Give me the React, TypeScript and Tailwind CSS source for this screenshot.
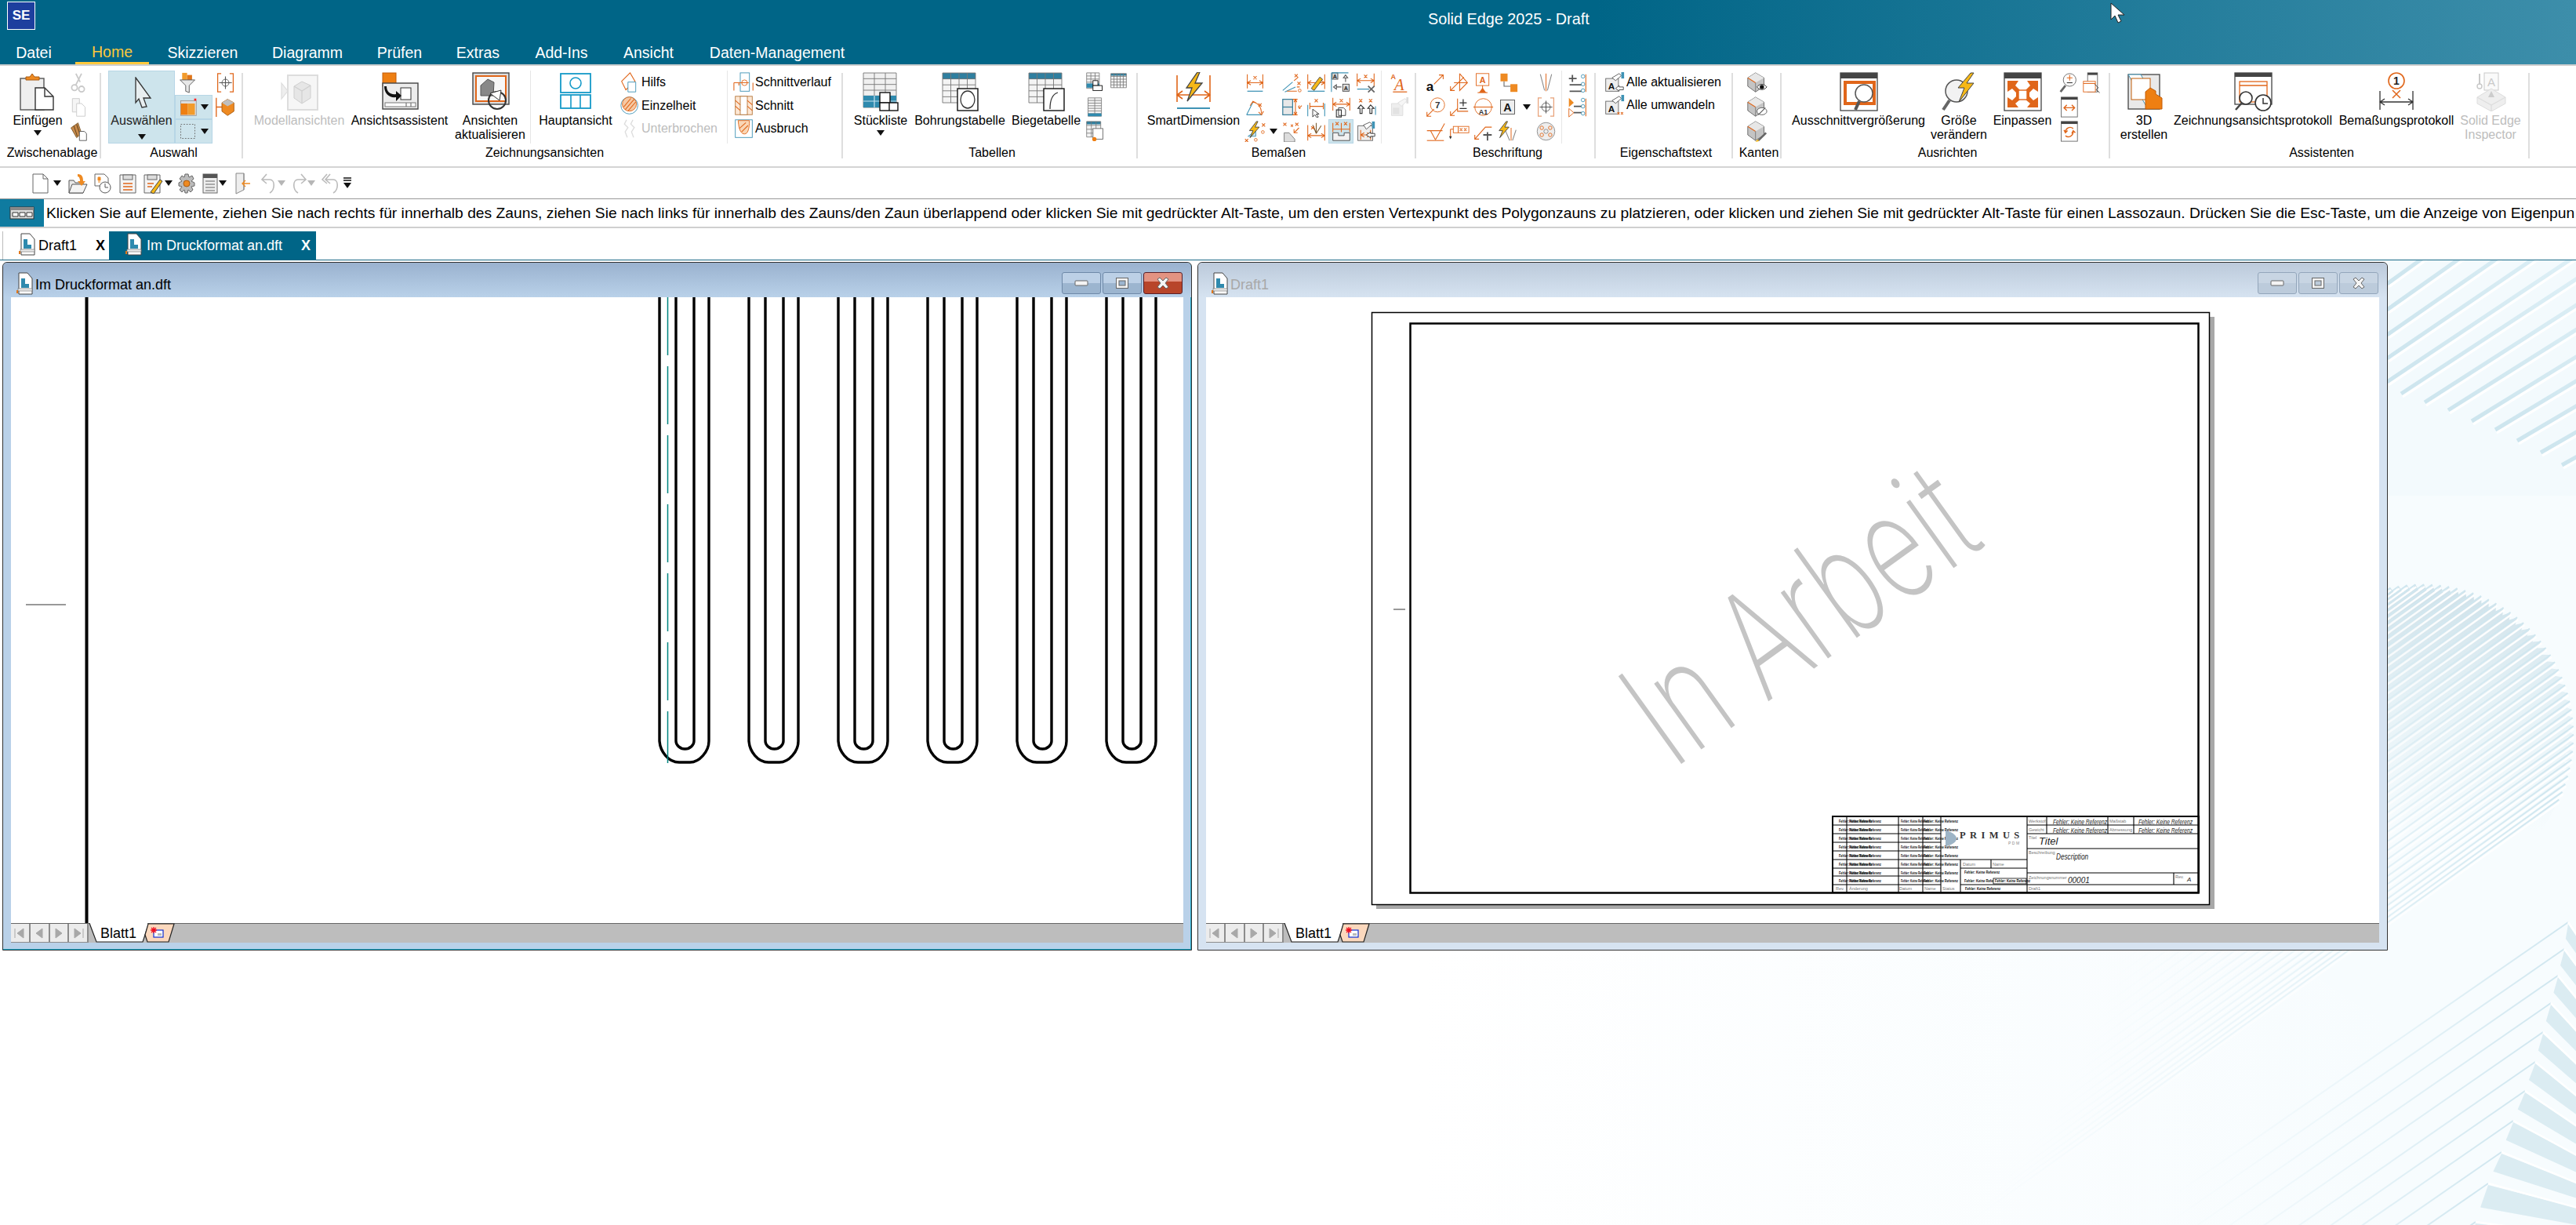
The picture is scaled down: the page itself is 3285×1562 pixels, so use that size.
import type { ReactNode } from 'react';

const O = '#e0661a';
const T = '#3f93b5';
const L = '#c9c9c9';

const x = (cx: number, cy: number, r = 2.2) => `M${cx - r} ${cy - r}L${cx + r} ${cy + r}M${cx + r} ${cy - r}L${cx - r} ${cy + r}`;
const dim = (l: number, r: number, y: number, t = 3, b = 25) =>
  `M${l} ${t}V${b}M${r} ${t}V${b}M${l} ${y}H${r}M${l + 5} ${y - 3}L${l} ${y}L${l + 5} ${y + 3}M${r - 5} ${y - 3}L${r} ${y}L${r - 5} ${y + 3}`;

const Ic = ({ s = 27, children }: { s?: number; children?: ReactNode }) => (
  <svg width={s} height={s} viewBox="0 0 30 30" fill="none" className="block shrink-0">{children}</svg>
);
const Big = ({ children }: { children?: ReactNode }) => (
  <svg width={50} height={50} viewBox="0 0 50 50" fill="none" className="block shrink-0">{children}</svg>
);
const P = ({ d, c = O, w = 1.2, f = 'none' }: { d: string; c?: string; w?: number; f?: string }) => (
  <path d={d} stroke={c} strokeWidth={w} fill={f} />
);
const Caret = () => (
  <svg width={10} height={7} viewBox="0 0 10 7" className="block shrink-0"><path d="M0 0H10L5 7z" fill="#111" /></svg>
);

const Grid = ({ l, t, w, h, c, r, head = 0, fill = '#f4f4f4' }: { l: number; t: number; w: number; h: number; c: number; r: number; head?: number; fill?: string }) => {
  const lines: string[] = [];
  for (let i = 0; i <= c; i++) lines.push(`M${l + (w * i) / c} ${t}V${t + h}`);
  for (let i = 0; i <= r; i++) lines.push(`M${l} ${t + (h * i) / r}H${l + w}`);
  return (
    <>
      <rect x={l} y={t} width={w} height={h} fill={fill} />
      {head > 0 && <rect x={l} y={t} width={w} height={head} fill="#2f7f9f" />}
      <path d={lines.join('')} stroke="#777" strokeWidth={0.9} />
    </>
  );
};

// grosse Ribbon-Symbole
const big: Record<string, ReactNode> = {
  paste: (
    <Big>
      <rect x="3" y="8" width="30" height="40" fill="#efefef" stroke="#555" strokeWidth="1.4" />
      <path d="M10 10V6h5l3-4 3 4h6v4z" fill="#ee8a22" stroke="#a85a10" />
      <path d="M22 20h12l11 11v17H22z" fill="#fff" stroke="#333" strokeWidth="1.4" />
      <P d="M34 20v11h11" c="#333" w={1.4} />
    </Big>
  ),
  model: (
    <Big>
      <P d="M2 14L10 24L2 34z" c="#ddd" f="#eee" />
      <rect x="10" y="4" width="38" height="44" fill="#f6f6f6" stroke="#ddd" strokeWidth="2" />
      <path d="M28 12L39 17V33L28 40L18 33V18z" fill="#e6e6e6" stroke="#cfcfcf" />
      <P d="M18 18L28 24L39 17M28 24V40" c="#cfcfcf" />
    </Big>
  ),
  wizard: (
    <Big>
      <rect x="3" y="1" width="17" height="17" fill="#ee7f12" stroke="#c25c08" />
      <rect x="3" y="14" width="45" height="33" fill="#ececec" stroke="#444" strokeWidth="1.4" />
      <rect x="6" y="39" width="39" height="5" fill="#fff" stroke="#777" />
      <P d="M33 39V44M39 39V44" c="#777" />
      <rect x="26" y="20" width="13" height="15" fill="#fff" stroke="#333" />
      <path d="M8 18C8 26 14 29 20 28V24L27 30L20 37V32C12 33 5 28 5 18z" fill="#111" />
    </Big>
  ),
  update: (
    <Big>
      <rect x="3" y="1" width="46" height="40" fill="#ddd" stroke="#444" strokeWidth="1.4" />
      <rect x="7" y="5" width="38" height="32" fill="#f7f7f7" stroke={O} strokeWidth="2" />
      <path d="M13 30V17L22 9L30 13L29 30z" fill="#888" stroke="#555" />
      <circle cx="34" cy="36" r="11" stroke="#333" strokeWidth="2" fill="none" />
      <path d="M25 27L39 23L37 36z" fill="#fff" stroke="#333" />
    </Big>
  ),
  principal: (
    <Big>
      <rect x="6" y="2" width="38" height="24" fill="#fff" stroke="#159ac8" strokeWidth="1.8" />
      <circle cx="25" cy="14" r="7" stroke="#159ac8" strokeWidth="1.6" />
      <rect x="6" y="29" width="38" height="17" stroke="#159ac8" strokeWidth="1.8" />
      <P d="M19 29V46M31 29V46" c="#159ac8" w={1.6} />
    </Big>
  ),
  parts: (
    <Big>
      <Grid l={3} t={1} w={42} h={44} c={3} r={6} fill="#f0f0f0" />
      <rect x="3" y="30" width="42" height="15" fill="#2f8aae" />
      <P d="M3 37H45M17 30V45M31 30V45" c="#c5e2ee" />
      <rect x="24" y="26" width="13" height="13" fill="#fff" stroke="#111" strokeWidth="1.4" />
      <rect x="24" y="39" width="23" height="10" fill="#fff" stroke="#111" strokeWidth="1.4" />
      <P d="M36 39V49" c="#111" w={1.4} />
    </Big>
  ),
  hole: (
    <Big>
      <Grid l={3} t={1} w={42} h={38} c={4} r={5} head={8} />
      <rect x="22" y="21" width="26" height="28" fill="#fff" stroke="#111" strokeWidth="1.4" />
      <ellipse cx="35" cy="35" rx="9" ry="11" stroke="#333" strokeWidth="1.3" />
    </Big>
  ),
  bend: (
    <Big>
      <Grid l={3} t={1} w={42} h={38} c={4} r={5} head={8} />
      <rect x="22" y="21" width="26" height="28" fill="#fff" stroke="#111" strokeWidth="1.4" />
      <P d="M30 47C30 36 33 28 40 26" c="#333" w={1.3} />
    </Big>
  ),
  smart: (
    <Big>
      <P d="M4 4V38M46 4V38M4 29H46M11 24L4 29L11 34M39 24L46 29L39 34" w={1.6} />
      <path d="M30 0L16 20H23L17 37L36 14H27L33 0z" fill="#f5b818" stroke="#444" strokeWidth="1.3" />
      <P d="M4 46H46" c={T} w={2} />
    </Big>
  ),
  zoomArea: (
    <Big>
      <rect x="2" y="1" width="47" height="48" fill="#fff" stroke="#444" strokeWidth="1.3" />
      <rect x="2" y="1" width="47" height="7" fill="#444" />
      <rect x="8" y="13" width="37" height="27" fill="#fff" stroke={O} strokeWidth="4" />
      <circle cx="32" cy="27" r="11" fill="#fff" stroke="#555" strokeWidth="1.5" />
      <path d="M26 37L21 48" stroke="#555" strokeWidth="4" />
    </Big>
  ),
  resize: (
    <Big>
      <circle cx="22" cy="24" r="14" fill="#f2f2f2" stroke="#555" strokeWidth="1.5" />
      <path d="M13 36L5 48" stroke="#666" strokeWidth="4" />
      <path d="M40 1L24 20H32L25 38L44 14H35L44 1z" fill="#f5b818" stroke="#444" />
    </Big>
  ),
  fit: (
    <Big>
      <rect x="2" y="1" width="47" height="48" fill="#fff" stroke="#444" strokeWidth="1.3" />
      <rect x="2" y="1" width="47" height="7" fill="#444" />
      <path d="M6 11H20L16 17L22 23H29L35 17L31 11H45V25L39 21L34 26V31L39 36L45 32V45H31L35 40L29 35H22L16 40L20 45H6V32L12 36L17 31V26L12 21L6 25z" fill="#e0661a" />
      <rect x="20" y="23" width="11" height="12" fill="#fff" stroke={O} strokeWidth="1.4" />
    </Big>
  ),
  create3d: (
    <Big>
      <rect x="5" y="3" width="40" height="44" fill="#e9e9e9" stroke="#444" strokeWidth="1.3" />
      <path d="M5 3L21 3L45 47H30z" fill="#fff" stroke={T} />
      <rect x="9" y="8" width="24" height="27" fill="#fff" stroke="#c25c08" />
      <path d="M27 25L33 20L40 24V28L48 33V47H27z" fill="#ee7f12" stroke="#c25c08" />
    </Big>
  ),
  viewLog: (
    <Big>
      <rect x="2" y="1" width="47" height="40" fill="#fff" stroke="#444" strokeWidth="1.3" />
      <rect x="2" y="1" width="47" height="5" fill="#444" />
      <rect x="8" y="12" width="35" height="26" fill="#fff" stroke={O} strokeWidth="1.3" />
      <P d="M8 17H43" w={1.3} />
      <circle cx="16" cy="33" r="8" fill="#fff" stroke="#333" strokeWidth="1.6" />
      <path d="M11 39L3 48" stroke="#444" strokeWidth="2.5" />
      <circle cx="38" cy="39" r="10" fill="#fff" stroke="#333" strokeWidth="1.6" />
      <P d="M38 33V40H44" c="#333" w={1.5} />
    </Big>
  ),
  dimLog: (
    <Big>
      <P d="M4 24V48M46 24V48M4 38H46M10 34L4 38L10 42M40 34L46 38L40 42" c="#333" w={1.3} />
      <circle cx="25" cy="11" r="10" fill="#fff" stroke={O} strokeWidth="1.6" />
      <text x="25" y="16" fontSize="14" fontWeight="700" textAnchor="middle" fill="#222">1</text>
      <P d={x(25, 28, 5)} w={1.5} />
    </Big>
  ),
  inspector: (
    <Big>
      <P d="M11 2V16M14 22" c={L} w={2} />
      <circle cx="11" cy="18" r="3" stroke={L} strokeWidth="1.4" />
      <rect x="17" y="1" width="18" height="22" fill="#fafafa" stroke={L} />
      <text x="26" y="18" fontSize="15" textAnchor="middle" fill={L}>A</text>
      <path d="M26 21L44 32V40L26 50L8 40V32z" fill="#eee" stroke="#ddd" />
      <P d="M8 32L26 42L44 32M26 42V50" c="#ddd" />
      <path d="M26 24L30 32H22z" fill="#ccc" />
    </Big>
  ),
};

const cube = (
  <>
    <path d="M13 1L25 8V20L13 28L2 20V8z" fill="#c4c4c4" stroke="#666" />
    <path d="M13 1L25 8L13 15L2 8z" fill="#e7e7e7" />
    <path d="M2 8L13 15" stroke={O} strokeWidth="1.2" />
    <path d="M13 15V28" stroke="#777" />
  </>
);

// kleine Ribbon-Symbole
const sm: Record<string, ReactNode> = {
  scissors: <Ic><P d="M20 2L12 18M12 2L18 14" c={L} w={2} /><circle cx="10" cy="22" r="4" stroke={L} strokeWidth="2" /><circle cx="20" cy="24" r="4" stroke={L} strokeWidth="2" /></Ic>,
  copy: <Ic><path d="M7 3H17V22H7z" fill="#f5f5f5" stroke={L} /><path d="M13 10H20L25 15V28H13z" fill="#fff" stroke={L} /></Ic>,
  painter: <Ic><path d="M5 10L15 3L20 18L13 24z" fill="#c98a4a" stroke="#7a5a30" /><P d="M9 7L14 22M13 5L18 20" c="#6a4a20" /><path d="M17 15H24L27 18V28H17z" fill="#fff" stroke="#555" /></Ic>,
  filter: <Ic><rect x="7" y="1" width="7" height="10" fill="#f29b2b" /><rect x="14" y="4" width="7" height="7" fill="#e0761a" /><path d="M4 11H25L17 19V29L12 27V19z" fill="#e8e8e8" stroke="#555" /></Ic>,
  fence: <Ic><P d="M9 2H4V28H9M21 2H26V28H21" w={1.4} /><circle cx="15" cy="15" r="5" stroke="#555" /><P d="M15 6V24M6 15H24" c="#555" /></Ic>,
  selBox: <Ic><rect x="5" y="6" width="22" height="21" fill="#ddd" stroke="#999" /><rect x="5" y="10" width="10" height="16" fill="#ee7f12" /><rect x="15" y="10" width="10" height="16" fill="#f29b2b" /><rect x="24" y="3" width="3" height="3" fill="#f22" /></Ic>,
  orangeCube: <Ic><P d="M2 2V29M2 15H10" w={1.5} /><path d="M18 4L27 9V21L18 27L10 21V9z" fill="#ee8a22" stroke="#a85a10" /><path d="M10 9L18 14L27 9L18 4z" fill="#bfbfbf" /></Ic>,
  dash: <Ic><rect x="5" y="5" width="20" height="20" stroke="#666" strokeDasharray="2 2" /></Ic>,
  hilfs: <Ic><path d="M3 13L15 1L22 13L9 25z" stroke={O} strokeWidth="1.2" fill="#fff" /><path d="M12 14H23V28H12z" stroke={T} fill="#fff" /></Ic>,
  einzelheit: <Ic><circle cx="14" cy="15" r="12" stroke={T} fill="#fff" /><circle cx="14" cy="13" r="10" fill="#f6c9a4" stroke={O} /><P d="M6 17L16 5M8 21L21 6M12 23L23 10" /></Ic>,
  broken: <Ic><P d="M10 2L7 8L12 13L8 19L11 27M19 2L16 8L21 13L17 19L20 27" c="#ddd" w={1.5} /></Ic>,
  verlauf: <Ic><rect x="10" y="1" width="13" height="26" fill="#fff" stroke={T} /><P d="M1 15H8V19M8 15H22M28 15V26" /><circle cx="16" cy="15" r="4" stroke={O} /><P d="M1 15V26" /></Ic>,
  schnitt: <Ic><rect x="3" y="2" width="24" height="26" fill="#fde7d4" stroke="#b5793f" /><rect x="10" y="2" width="10" height="26" fill="#fff" stroke="#b5793f" /><P d="M3 8L10 14M3 16L10 22M20 8L27 14M20 16L27 22" /></Ic>,
  ausbruch: <Ic><rect x="3" y="2" width="24" height="25" fill="#fff" stroke={T} /><path d="M7 3C8 18 12 22 16 22C21 22 23 14 23 3z" fill="#f9d7b6" stroke={O} /><P d="M9 14L18 6M12 19L21 10" /></Ic>,
  t1: <Ic><Grid l={3} t={1} w={18} h={22} c={3} r={5} /><rect x="3" y="16" width="18" height="6" fill="#2f8aae" /><rect x="12" y="12" width="7" height="7" fill="#fff" stroke="#111" /><rect x="12" y="19" width="13" height="7" fill="#fff" stroke="#111" /></Ic>,
  t2: <Ic><Grid l={4} t={2} w={22} h={20} c={5} r={5} head={3} /></Ic>,
  t3: <Ic><Grid l={5} t={2} w={19} h={26} c={2} r={7} /><rect x="5" y="24" width="19" height="4" fill="#2f8aae" /></Ic>,
  t4: <Ic><Grid l={3} t={1} w={20} h={22} c={3} r={4} head={4} /><rect x="12" y="11" width="14" height="15" fill="#fff" stroke="#666" /><circle cx="14" cy="26" r="3" fill="#ee7f12" /></Ic>,
  b11: <Ic><P d={dim(4, 26, 15, 3, 23) + x(15, 8)} /><P d="M4 27H26" c={T} w={1.4} /></Ic>,
  b12: <Ic><P d="M2 26L16 14M5 28L20 21" c={T} /><P d="M18 12L24 7M22 21H26M8 27H22" /><P d={x(21, 5) + x(25, 16)} /><circle cx="26" cy="26" r="2" stroke={O} /></Ic>,
  b13: <Ic><P d={dim(3, 27, 15, 3, 24)} /><path d="M8 23L20 7L24 10L12 26z" fill="#f5b818" stroke="#444" /><P d="M3 27H27" c={T} w={1.4} /></Ic>,
  b14: <Ic><rect x="2" y="1" width="8" height="9" fill="#ddd" stroke="#444" /><text x="6" y="9" fontSize="8" fontWeight="700" textAnchor="middle" fill="#222">A</text><rect x="17" y="17" width="9" height="10" fill="#ddd" stroke="#444" /><text x="21.500" y="25" fontSize="8" fontWeight="700" textAnchor="middle" fill="#222">A</text><P d="M1 1V28M1 1H25" c={T} /><P d="M21 4L18 8H24zM21 8V14M4 21L8 18V24zM8 21H15" c="#555" /></Ic>,
  b15: <Ic><P d={dim(3, 27, 12, 2, 20) + x(15, 6)} /><P d="M3 24H20" c={T} w={1.4} /><P d={x(23, 24, 4.5)} c="#666" w={2} /></Ic>,
  b21: <Ic><P d="M3 26L12 8M3 26H25" c={T} /><P d="M11 8C18 8 24 14 24 24M8 13L12 7L16 9M20 22L24 26L27 21" /><P d={x(22, 12)} /></Ic>,
  b22: <Ic><rect x="2" y="4" width="14" height="22" fill="#e8e8e8" stroke="#3b7f9b" strokeWidth="1.4" /><P d="M2 15H16" c="#3b7f9b" w={1.4} /><P d="M16 4H23M16 26H23M20 5V25M18 8L20 4L22 8M18 22L20 26L22 22" /><P d="M25 17L29 13M26 13a2 2 0 1 0 1 4" /></Ic>,
  b23: <Ic><P d="M3 12V28M27 10V28" c={T} /><P d="M6 9V18M25 9V18M6 14H25" /><P d={x(15, 6)} /><path d="M10 18V29L13 26L16 30L18 29L15 25H19z" fill="#fff" stroke="#333" /></Ic>,
  b24: <Ic><P d={dim(3, 27, 11, 2, 20) + x(15, 6)} /><path d="M11 16H18L21 19V27H11z" fill="#fff" stroke="#333" /><P d="M8 19H15V29H8z" c="#333" /></Ic>,
  b25: <Ic><P d={x(8, 6) + x(22, 6)} /><P d="M8 12L4 17H7V24H10V17H13zM22 12L18 17H21V24H24V17H27z" c="#333" /><P d="M29 14V26" c={T} /></Ic>,
  b31: <Ic><path d="M5 22H16V14z" fill="#cfe4ee" stroke={T} /><path d="M17 1L7 14H12L8 24L21 9H15L19 1z" fill="#f5b818" stroke="#444" /><P d={x(27, 6) + x(3, 28)} /><circle cx="26" cy="16" r="2" stroke={O} /><circle cx="16" cy="27" r="2" stroke={O} /></Ic>,
  b33: <Ic><P d={x(5, 5) + x(15, 7, 1.5) + x(22, 5)} /><P d="M25 10L18 17M18 12V17H23" /><path d="M4 17H11L19 26V30H4z" fill="#ddd" stroke="#777" /></Ic>,
  b34: <Ic><P d={dim(3, 27, 21, 6, 28)} /><P d="M15 18L10 6M15 18L15 3M15 18L22 7M15 18L12 10" c="#7a5a30" /><P d={x(10, 10)} /></Ic>,
  b35: <Ic><P d={x(9, 4) + x(21, 4) + 'M3 3V16M15 3V16M27 3V16M3 12H15M15 12H27'} /><path d="M3 17H11V21H19V17H27V28H3z" fill="#f2f2f2" stroke="#444" /></Ic>,
  b36: <Ic><rect x="4" y="7" width="21" height="21" fill="#eee" stroke="#666" /><path d="M12 6L21 2L24 5L16 12z" fill="#fff" stroke="#555" /><rect x="24" y="1" width="4" height="10" fill={T} /><P d={dim(8, 22, 20, 13, 27)} /><path d="M16 20L22 16V18H28V22H22V24z" fill="#fff" stroke="#333" /></Ic>,
  styleA: <Ic><text x="4" y="10" fontSize="10" fontWeight="700" fill={O}>A</text><text x="9" y="25" fontSize="23" fontFamily="'Liberation Serif',serif" fontStyle="italic" fill={O}>A</text><P d="M7 28H27" w={1.4} /></Ic>,
  styleG: <Ic><path d="M5 10H21V27H5z" fill="#eee" stroke="#ddd" /><path d="M14 9L24 3L27 6L19 14z" fill="#f6f6f6" stroke="#ddd" /><rect x="26" y="1" width="3" height="9" fill="#ddd" /><rect x="7" y="16" width="9" height="9" fill="#e2e2e2" /></Ic>,
  c11: <Ic><text x="2" y="27" fontSize="19" fontWeight="700" fill="#111">a</text><P d="M13 17L26 4M20 4H26V10" /></Ic>,
  c12: <Ic><P d="M3 26L22 7M3 20V26H9M16 2V26L27 15L16 2M8 15H27" /></Ic>,
  c13: <Ic><rect x="5" y="2" width="18" height="17" fill="#fff" stroke={O} /><text x="14" y="15" fontSize="12" fontWeight="700" textAnchor="middle" fill={O}>A</text><P d="M14 19V24" /><path d="M9 29L14 22L19 29z" fill={O} /><P d="M7 29H21" /></Ic>,
  c14: <Ic><rect x="5" y="2" width="10" height="11" fill="#ee8a22" /><P d="M10 13V20H21" c="#666" /><rect x="19" y="17" width="10" height="11" fill="#ee8a22" /></Ic>,
  c15: <Ic><P d="M7 3L13 26M23 3L17 26" c="#888" /><P d="M15 2V27" w={1.1} /></Ic>,
  c21: <Ic><P d="M3 28L13 18M3 22V28H9" /><circle cx="18" cy="12" r="10" stroke={O} /><text x="18" y="17" fontSize="13" fontWeight="700" textAnchor="middle" fill="#333">7</text></Ic>,
  c22: <Ic><P d="M3 27L13 17M3 21V27H9M13 3V21H28" /><P d="M16 9H26M21 4V14M16 17H26" c="#333" w={1.4} /></Ic>,
  c23: <Ic><circle cx="15" cy="15" r="12" stroke={O} /><P d="M1 15H29" /><text x="15" y="26" fontSize="10" fontWeight="700" textAnchor="middle" fill="#333">A1</text></Ic>,
  c24: <Ic><rect x="5" y="5" width="20" height="20" fill="#eee" stroke="#555" /><text x="15" y="21" fontSize="16" fontWeight="700" textAnchor="middle" fill="#111">A</text></Ic>,
  c25: <Ic><P d="M9 2H4V28H9M21 2H26V28H21" c="#e8a27a" w={1.4} /><circle cx="15" cy="15" r="6" stroke="#555" /><P d="M15 6V24M6 15H24" c="#555" /></Ic>,
  c31: <Ic><P d="M3 14H25M15 27L8 14M15 27L28 4" /><P d="M3 28H27" /></Ic>,
  c32: <Ic><rect x="7" y="8" width="22" height="9" fill="#fff" stroke={O} /><P d="M3 12H7M3 12V24M14 8V17" /><path d="M1 22L3 26L5 22z" fill="#333" /><P d={x(18, 12.500, 1.8) + x(24, 12.500, 1.8)} /></Ic>,
  c33: <Ic><P d="M3 26L18 9H27M3 20V26H9" /><P d="M15 20H27M21 16V28" c="#555" w={2} /></Ic>,
  c34: <Ic><path d="M13 1L3 14H8L4 24L17 9H11L15 1z" fill="#f5b818" stroke="#444" /><P d="M12 14L18 28M27 13L22 28" c="#888" /><P d="M20 10V28" w={1.1} /></Ic>,
  c35: <Ic><circle cx="15" cy="15" r="12.500" fill="#eee" stroke="#888" /><circle cx="15" cy="15" r="3" stroke="#888" /><circle cx="9" cy="10" r="2.500" stroke={O} /><circle cx="21" cy="10" r="2.500" stroke={O} /><circle cx="9" cy="20" r="2.500" stroke={O} /><circle cx="21" cy="20" r="2.500" stroke={O} /></Ic>,
  d1: <Ic><P d="M3 9H14M8 4V14M4 18H21M4 27H21" c="#555" w={2} /><P d="M27 3V28" /><circle cx="23" cy="6" r="2.500" stroke={T} /><circle cx="23" cy="17" r="2.500" stroke={T} /><circle cx="23" cy="26" r="2.500" stroke={T} /></Ic>,
  d2: <Ic><path d="M3 2L10 9L3 15z" fill="#ee8a22" /><path d="M3 17L10 23L3 29z" fill="#fff" stroke={O} /><P d="M10 14H21M10 23H21" c="#555" w={2} /><P d="M27 3V28" /><circle cx="23" cy="5" r="2.500" stroke={T} /><circle cx="23" cy="14" r="2.500" stroke={T} /><circle cx="23" cy="24" r="2.500" stroke={T} /></Ic>,
  e1: <Ic><rect x="3" y="9" width="18" height="18" fill="#eee" stroke="#666" /><path d="M12 8L22 2L25 5L17 12z" fill="#fff" stroke="#555" /><rect x="25" y="0" width="4" height="9" fill={T} /><text x="11" y="24" fontSize="13" fontWeight="700" textAnchor="middle" fill="#111">A</text><path d="M17 23L22 19V21H28V25H22V27z" fill="#fff" stroke="#444" /></Ic>,
  e2: <Ic><rect x="3" y="9" width="18" height="18" fill="#eee" stroke="#666" /><path d="M12 8L22 2L25 5L17 12z" fill="#fff" stroke="#555" /><rect x="25" y="0" width="4" height="9" fill={T} /><text x="11" y="24" fontSize="13" fontWeight="700" textAnchor="middle" fill="#111">A</text><P d={x(21, 26, 1.5) + x(26, 26, 1.5)} /></Ic>,
  k1: <Ic>{cube}<path d="M15 21C19 16 25 16 29 21C25 26 19 26 15 21z" fill="#fff" stroke="#222" /><circle cx="22" cy="21" r="3" fill="#111" /></Ic>,
  k2: <Ic>{cube}<ellipse cx="22" cy="21" rx="7" ry="5" fill="#fff" stroke="#555" /><P d="M17 26L27 16" c="#555" /></Ic>,
  k3: <Ic>{cube}<path d="M15 28L27 16L29 18L18 29z" fill="#666" /><path d="M13 30L16 26L18 29z" fill="#f5b818" /></Ic>,
  a1: <Ic><circle cx="17" cy="11" r="9" fill="#fff" stroke="#666" /><path d="M11 19L4 28" stroke="#666" strokeWidth="3" /><P d="M13 8H21M17 4V12" /><P d="M13 15H21" c="#333" /></Ic>,
  a2: <Ic><rect x="8" y="1" width="14" height="27" fill="#fff" stroke="#666" /><rect x="8" y="1" width="14" height="3" fill="#444" /><rect x="2" y="13" width="17" height="15" fill="#fff" stroke={O} /><P d="M2 16H19" /><path d="M18 17L23 22L20 25L25 29" stroke="#333" /></Ic>,
  a3: <Ic><rect x="5" y="1" width="23" height="28" fill="#fff" stroke="#666" /><rect x="5" y="1" width="23" height="3.500" fill="#444" /><P d="M9 16H24M13 12L9 16L13 20M20 12L24 16L20 20" w={1.6} /></Ic>,
  a4: <Ic><rect x="5" y="1" width="23" height="28" fill="#fff" stroke="#666" /><rect x="5" y="1" width="23" height="3.500" fill="#444" /><P d="M22 11C17 7 11 11 11 16M9 13L11 17L14 14M11 21C15 25 22 22 22 15M20 18L22 14L25 17" w={1.6} /></Ic>,
};

const docIcon = (
  <svg width={22} height={32} viewBox="0 0 22 32" fill="none" className="block shrink-0">
    <path d="M4 1H15L21 8V28H4z" fill="#fff" stroke="#444" />
    <path d="M7 8H12V15H17V20H7z" fill="#2f8aae" />
    <rect x="3" y="21" width="18" height="3" fill="#eee" stroke="#777" strokeWidth="0.7" />
    <path d="M1 23H3V27H1z" fill="#e0761a" />
  </svg>
);

const q = {
  page: <svg width={22} height={26} viewBox="0 0 22 26" fill="none" className="block"><path d="M1 1H14L20 7V25H1z" fill="#fff" stroke="#666" /><path d="M14 1V7H20" stroke="#666" /></svg>,
  open: <svg width={26} height={26} viewBox="0 0 26 26" fill="none" className="block"><path d="M2 9H8L10 12H20V25H2z" fill="#e8e8e8" stroke="#555" /><path d="M6 14H25L20 25H2z" fill="#f4f4f4" stroke="#555" /><path d="M13 1C19 1 20 5 20 10H23L18 16L13 10H16C16 7 15 4 13 4z" fill="#ee8a22" /></svg>,
  history: <svg width={24} height={26} viewBox="0 0 24 26" fill="none" className="block"><path d="M2 1H14L19 6V16H2V1z" fill="#fff" stroke="#666" /><path d="M6 5H9V9H6zM6 11H9" fill="#ee8a22" stroke="#ee8a22" /><circle cx="15" cy="18" r="7" fill="#fff" stroke="#555" /><path d="M15 13V18H19" stroke="#555" /></svg>,
  save: <svg width={24} height={26} viewBox="0 0 24 26" fill="none" className="block"><path d="M2 2H22V25H2z" fill="#f4f4f4" stroke="#666" /><rect x="6" y="2" width="12" height="6" fill="#ddd" stroke="#666" /><path d="M6 13H18M6 17H18M6 21H18" stroke={O} strokeWidth="1.4" /></svg>,
  saveAs: <svg width={26} height={26} viewBox="0 0 26 26" fill="none" className="block"><path d="M2 2H22V25H2z" fill="#f4f4f4" stroke="#666" /><rect x="6" y="2" width="12" height="6" fill="#ddd" stroke="#666" /><path d="M6 13H14M6 17H12" stroke={O} strokeWidth="1.4" /><path d="M10 24L22 8L25 10L14 26z" fill="#f5b818" stroke="#444" /></svg>,
  gear: <svg width={24} height={26} viewBox="0 0 24 26" fill="none" className="block"><path d="M10 1H14L15 5L19 3L21 7L18 10L22 12V16L18 17L20 21L17 24L14 21L13 25H10L9 21L6 24L3 21L6 17L2 16V12L6 10L3 7L6 3L9 5z" fill="#bbb" stroke="#666" /><circle cx="12" cy="13" r="4" fill="#ee8a22" stroke="#a85a10" /></svg>,
  list: <svg width={20} height={26} viewBox="0 0 20 26" fill="none" className="block"><rect x="1" y="1" width="18" height="24" fill="#eee" stroke="#666" /><rect x="1" y="1" width="18" height="5" fill="#555" /><path d="M4 10H16M4 14H16M4 18H16M4 22H16" stroke="#666" /></svg>,
  exit: <svg width={22} height={28} viewBox="0 0 22 28" fill="none" className="block"><path d="M2 1H12V22L2 27z" fill="#eee" stroke="#888" /><path d="M12 1V22" stroke="#888" /><path d="M20 14H10M14 10L10 14L14 18" stroke="#ee8a22" strokeWidth="1.4" /></svg>,
  undo: <svg width={22} height={28} viewBox="0 0 22 28" fill="none" className="block"><path d="M8 2L2 9L8 14M2 9H12C19 9 19 22 12 26" stroke="#bbb" strokeWidth="1.6" /></svg>,
  redo: <svg width={22} height={28} viewBox="0 0 22 28" fill="none" className="block"><path d="M14 2L20 9L14 14M20 9H10C3 9 3 22 10 26" stroke="#bbb" strokeWidth="1.6" /></svg>,
  undoAll: <svg width={26} height={28} viewBox="0 0 26 28" fill="none" className="block"><path d="M8 2L2 9L8 14M12 2L6 9L12 14M6 9H16C23 9 23 22 16 26" stroke="#bbb" strokeWidth="1.6" /></svg>,
  custom: <svg width={12} height={16} viewBox="0 0 12 16" className="block"><path d="M1 1H11M1 4H11" stroke="#111" strokeWidth="1.6" /><path d="M1 7H11L6 14z" fill="#111" /></svg>,
};

function Group({ w, label, children }: { w: number; label: string; children?: ReactNode }) {
  return (
    <div className="flex flex-col shrink-0" style={{ width: w }}>
      <div className="flex h-[93px] mt-[6px] whitespace-nowrap">{children}</div>
      <div className="pt-[1px] pl-[6px] text-center text-[16px] leading-[22px] text-black whitespace-nowrap">{label}</div>
    </div>
  );
}
const Sep = () => <div className="w-[2px] h-[109px] mt-[9px] bg-[#dedede] shrink-0" />;
const ThinSep = ({ ml }: { ml: number }) => <div className="w-[1px] h-[93px] bg-[#e6e6e6] shrink-0" style={{ marginLeft: ml }} />;

function BigBtn({ w, ml, icon, label, off, caret }: { w: number; ml: number; icon: ReactNode; label: string; off?: boolean; caret?: boolean }) {
  return (
    <div className="flex flex-col items-center shrink-0" style={{ width: w, marginLeft: ml }}>
      <div className="h-[55px] pb-[1px] flex items-center justify-center">{icon}</div>
      <div className={`text-[16px] leading-[18px] text-center whitespace-pre-line ${off ? 'text-[#bdbdbd]' : 'text-black'}`}>{label}</div>
      {caret && <div className="mt-[3px]"><Caret /></div>}
    </div>
  );
}

const Cell = ({ children }: { children?: ReactNode }) => <div className="flex items-center justify-center h-[31px]">{children}</div>;

function TextRow({ icon, label, off, h = 'h-[29px]' }: { icon: ReactNode; label: string; off?: boolean; h?: string }) {
  return (
    <div className={`flex items-center gap-[3px] ${h} text-[16px] ${off ? 'text-[#bdbdbd]' : 'text-black'}`}>
      {icon}
      <span>{label}</span>
    </div>
  );
}
const ScaledIc = ({ children }: { children: ReactNode }) => <div className="w-[24px] h-[30px] flex items-center justify-center overflow-visible">{children}</div>;

function WinButtons({ active }: { active: boolean }) {
  const base = 'w-[50px] h-[28px] rounded-[3px] border flex items-center justify-center';
  const n = active
    ? 'border-[#6e89a8] bg-[linear-gradient(#bcd0e6_50%,#9cb5cf_50%)]'
    : 'border-[#93a6bb] bg-[linear-gradient(#c8d5e3_50%,#bccbdb_50%)]';
  const c = active ? 'border-[#5a2028] bg-[linear-gradient(#e39382_42%,#b8452a_42%)]' : n;
  return (
    <div className="flex gap-[2px]">
      <div className={`${base} ${n}`}>
        <svg width={18} height={8} viewBox="0 0 18 8"><rect x="1" y="1" width="16" height="6" rx="1" fill="#f4f4f4" stroke="#666" /></svg>
      </div>
      <div className={`${base} ${n}`}>
        <svg width={18} height={16} viewBox="0 0 18 16"><rect x="1.500" y="1.500" width="15" height="13" fill="#f4f4f4" stroke="#666" /><rect x="5" y="5" width="8" height="6" fill={active ? '#9cb5cf' : '#bccbdb'} stroke="#666" /></svg>
      </div>
      <div className={`${base} ${c}`}>
        <svg width={18} height={16} viewBox="0 0 18 16"><path d="M2 3L5 1L9 5L13 1L16 3L12 8L16 13L13 15L9 11L5 15L2 13L6 8z" fill="#f4f4f4" stroke="#666" /></svg>
      </div>
    </div>
  );
}

function SheetTabs() {
  const nav = [
    <path key="a" d="M3 3V15M14 3L6 9L14 15z" />,
    <path key="b" d="M13 3L5 9L13 15z" />,
    <path key="c" d="M5 3L13 9L5 15z" />,
    <path key="d" d="M4 3L12 9L4 15zM15 3V15" />,
  ];
  return (
    <div className="h-[25px] bg-[#bdbdbd] border-t border-[#666] flex shrink-0">
      {nav.map((g, i) => (
        <div key={i} className="w-[24.750px] h-[24px] bg-[#ececec] border-r-2 border-b border-[#8c8c8c] flex items-center justify-center">
          <svg width={18} height={18} viewBox="0 0 18 18" fill="#a8a8a8" stroke="#a8a8a8">{g}</svg>
        </div>
      ))}
      <svg width={112} height={25} viewBox="0 0 112 25" className="block -mt-[1px]">
        <path d="M1 0L10 24H69L75 7L75 0z" fill="#fff" />
        <path d="M1 0L10 24H69L76 3" stroke="#222" strokeWidth="1.2" fill="none" />
        <text x="15" y="19" fontSize="18" fill="#000">Blatt1</text>
        <path d="M76 1H109L102 24H75L72 15z" fill="#fbd8bd" stroke="#222" strokeWidth="1.2" />
        <rect x="83" y="9" width="12" height="9" fill="#fff" stroke="#1030d0" strokeWidth="1.2" />
        <rect x="88" y="13" width="5" height="3" fill="#bbb" />
        <path d="M80 6L86 12M86 6L80 12M83 5V13M79 9H87" stroke="#f01020" strokeWidth="1.3" />
      </svg>
    </div>
  );
}

function Win({ active, title, w, children }: { active: boolean; title: string; w: number; children?: ReactNode }) {
  return (
    <div
      className={`relative flex flex-col h-[878px] shrink-0 border border-[#333] rounded-t-[6px] ${active ? 'bg-[#b9d1e9] shadow-[inset_-1px_-1px_0_#19a5c5]' : 'bg-[#d6e3f1]'}`}
      style={{ width: w }}
    >
      <div className={`h-[44px] shrink-0 flex items-start pl-[16px] pr-[11px] rounded-t-[6px] ${active ? 'bg-[linear-gradient(#9ab2cf,#b9d1e9)]' : 'bg-[linear-gradient(#bccadb,#d6e3f1)]'}`}>
        <div className="flex items-center mt-[12px]">
          {docIcon}
          <span className={`ml-[3px] text-[18px] ${active ? 'text-black' : 'text-[#a8a8a8]'}`}>{title}</span>
        </div>
        <div className="ml-auto mt-[12px]"><WinButtons active={active} /></div>
      </div>
      <div className="flex flex-col flex-1 min-h-0 mx-[10px] mb-[9px]">
        <div className="relative flex-1 min-h-0 bg-white overflow-hidden">{children}</div>
        <SheetTabs />
      </div>
    </div>
  );
}

// Zeichnung links: sechs U-Schleifen
function LeftDrawing() {
  const us = [0, 1, 2, 3, 4, 5];
  return (
    <svg className="absolute inset-0 w-full h-full" viewBox="14 379 1495 798" fill="none">
      <path d="M110.500 379V1177" stroke="#000" strokeWidth="4" />
      <path d="M33 771H84" stroke="#777" strokeWidth="1.5" />
      {us.map((i) => (
        <g key={i} transform={`translate(${i * 114} 0)`} stroke="#000" strokeWidth="3.400">
          <path d="M841 379V945C842 958 852 972 866 972H880C892 972 904 958 904 945V379" />
          <path d="M862 379V945C862 950 867 955 873.500 955C880 955 885 950 885 945V379" />
        </g>
      ))}
      <path d="M851.500 379V973" stroke="#00857f" strokeWidth="1.500" strokeDasharray="74 14" />
    </svg>
  );
}

const rowsY = [1041, 1052, 1063, 1074, 1085, 1096, 1107, 1117, 1128, 1138];
const Fk = 'Fehler: Keine Referenz';

// Zeichnung rechts: Blatt, Rahmen, Schriftfeld, Wasserzeichen
function RightDrawing() {
  const vline = (xx: number, a: number, b: number) => `M${xx} ${a}V${b}`;
  const hline = (a: number, b: number, y: number) => `M${a} ${y}H${b}`;
  const tb = [
    ...rowsY.slice(0, 9).map((y) => hline(2337, 2475, y)),
    hline(2475, 2585, 1096), hline(2500, 2585, 1107), hline(2500, 2585, 1128),
    vline(2355, 1041, 1138), vline(2421, 1041, 1138), vline(2452, 1041, 1138), vline(2475, 1041, 1138),
    vline(2500, 1096, 1138), vline(2539, 1096, 1107), vline(2585, 1041, 1138),
    vline(2610, 1041, 1063), vline(2688, 1041, 1063), vline(2721, 1041, 1063),
    hline(2585, 2804, 1052), hline(2585, 2804, 1063), hline(2585, 2804, 1082), hline(2585, 2804, 1113), hline(2585, 2804, 1128),
    vline(2772, 1113, 1128),
  ].join('');
  return (
    <svg className="absolute inset-0 w-full h-full" viewBox="1538 379 1496 798" fill="none">
      <rect x="1755" y="404" width="1069" height="755" fill="#a8a8a8" />
      <rect x="1749.500" y="398.500" width="1068" height="755" fill="#fff" stroke="#000" strokeWidth="1.5" />
      <rect x="1798.500" y="412.500" width="1005" height="726" stroke="#000" strokeWidth="2.500" />
      <path d="M1777 777H1792" stroke="#777" strokeWidth="1.5" />
      <text transform="translate(2133 982) rotate(-35.700) scale(0.69 1)" fontSize="189" fontFamily="Inter, sans-serif" fontWeight="250" fill="#c4c4c4">In Arbeit</text>
      <path d={tb} stroke="#000" strokeWidth="1.100" />
      <path d="M2337 1041H2804V1138H2337z" stroke="#000" strokeWidth="2" />
      <g fontSize="6" fontWeight="700" fill="#111">
        {rowsY.slice(0, 8).map((y, i) => (
          <g key={i}>
            <text x="2345" y={y + 8} textLength={42} lengthAdjust="spacingAndGlyphs">{Fk}</text>
            <text x="2358" y={y + 8} textLength={41} lengthAdjust="spacingAndGlyphs">{Fk}</text>
            <text x="2424" y={y + 8} textLength={36} lengthAdjust="spacingAndGlyphs">{Fk}</text>
            <text x="2453" y={y + 8} textLength={44} lengthAdjust="spacingAndGlyphs">{Fk}</text>
          </g>
        ))}
        <text x="2505" y="1113.500" textLength={45} lengthAdjust="spacingAndGlyphs">{Fk}</text>
        <text x="2505" y="1125" textLength={45} lengthAdjust="spacingAndGlyphs">{Fk}</text>
        <text x="2506" y="1135" textLength={45} lengthAdjust="spacingAndGlyphs">{Fk}</text>
        <rect x="2542" y="1120" width="42" height="7" fill="#fff" stroke="#000" strokeWidth="0.8" />
        <text x="2544" y="1125" textLength={45} lengthAdjust="spacingAndGlyphs">{Fk}</text>
      </g>
      <g fontSize="5.500" fill="#777">
        <text x="2341" y="1135">Rev.</text>
        <text x="2358" y="1135">Änderung</text>
        <text x="2422" y="1135">Datum</text>
        <text x="2454" y="1135">Name</text>
        <text x="2477" y="1135">Status</text>
        <text x="2503" y="1104">Datum</text>
        <text x="2541" y="1104">Name</text>
        <text x="2587" y="1049">Werkstoff</text>
        <text x="2587" y="1060">Gewicht</text>
        <text x="2690" y="1049">Maßstab</text>
        <text x="2690" y="1060">Abmessung</text>
        <text x="2587" y="1070">Titel</text>
        <text x="2587" y="1089">Beschreibung</text>
        <text x="2587" y="1121">Zeichnungsnummer</text>
        <text x="2774" y="1120">Rev.</text>
        <text x="2587" y="1135">Draft1</text>
      </g>
      <g fontStyle="italic" fill="#222">
        <text x="2618" y="1051" fontSize="9" textLength={69} lengthAdjust="spacingAndGlyphs">{Fk}</text>
        <text x="2618" y="1062" fontSize="9" textLength={69} lengthAdjust="spacingAndGlyphs">{Fk}</text>
        <text x="2727" y="1051" fontSize="9" textLength={69} lengthAdjust="spacingAndGlyphs">{Fk}</text>
        <text x="2727" y="1062" fontSize="9" textLength={69} lengthAdjust="spacingAndGlyphs">{Fk}</text>
        <text x="2600" y="1077" fontSize="13">Titel</text>
        <text x="2622" y="1096" fontSize="10" textLength={41} lengthAdjust="spacingAndGlyphs">Description</text>
        <text x="2637" y="1126" fontSize="10">00001</text>
        <text x="2789" y="1124" fontSize="8">A</text>
      </g>
      <path d="M2481 1059C2491 1061 2495 1066 2495 1069C2495 1073 2491 1077 2481 1079z" fill="#9db4c6" />
      <text x="2499" y="1069" fontSize="12.500" fontWeight="700" letterSpacing="5.400" fontFamily="'Liberation Serif', serif" fill="#333">PRIMUS</text>
      <text x="2561" y="1077" fontSize="5" letterSpacing="1.500" fill="#888">PDM</text>
    </svg>
  );
}

// Hintergrundbild des MDI-Bereichs
const C = { x: 3090, y: 937, r: 192 };
const teeth: [number, number][] = [];
for (let a = -130; a <= 25; a += 3.2) teeth.push([a, a + 1.9]);
const pt = (deg: number, r: number): [number, number] => [C.x + r * Math.cos((deg * Math.PI) / 180), C.y + r * Math.sin((deg * Math.PI) / 180)];
const gearPts = teeth
  .flatMap(([a, b]) => [pt(a, C.r - 9), pt(b, C.r)])
  .map((p) => p.map((v) => v.toFixed(1)).join(','));
const gearPoly = [...gearPts, `${C.x},${C.y + 400}`, `${C.x - 300},${C.y + 200}`].join(' ');
const upper = [
  [3044, 362], [3044, 395], [3044, 427], [3044, 457], [3044, 487], [3062, 502], [3092, 513], [3122, 523], [3152, 537], [3182, 548], [3210, 562], [3240, 577], [3267, 593],
];
const peaks = [
  [3275, 1176], [3270, 1210], [3262, 1244], [3253, 1279], [3243, 1316], [3233, 1354], [3220, 1391], [3205, 1429], [3190, 1469], [3173, 1509], [3157, 1558],
];

function Backdrop() {
  return (
    <svg className="absolute inset-0 w-full h-full" viewBox="0 332 3285 1230" fill="none">
      <defs>
        <linearGradient id="base" x1="0" x2="1" y1="0" y2="0">
          <stop offset="0.55" stopColor="#ffffff" />
          <stop offset="0.93" stopColor="#f7fcfe" />
        </linearGradient>
        <linearGradient id="gearFill" gradientUnits="userSpaceOnUse" x1="0" x2="0" y1="745" y2="1060">
          <stop offset="0" stopColor="#cfe1e9" />
          <stop offset="0.45" stopColor="#e4f1f6" />
          <stop offset="1" stopColor="#f7fcfe" />
        </linearGradient>
        <linearGradient id="fadeLine" x1="1" y1="0" x2="0" y2="1">
          <stop offset="0" stopColor="#cfe6ef" />
          <stop offset="1" stopColor="#e8f5fa" stopOpacity="0" />
        </linearGradient>
        <linearGradient id="fadeWhite" x1="1" y1="0" x2="0" y2="1">
          <stop offset="0" stopColor="#ffffff" />
          <stop offset="1" stopColor="#ffffff" stopOpacity="0" />
        </linearGradient>
        <linearGradient id="upperLine" x1="0" y1="1" x2="1" y2="0">
          <stop offset="0" stopColor="#cde5ee" />
          <stop offset="1" stopColor="#e3f3f9" />
        </linearGradient>
      </defs>
      <rect x="0" y="332" width="3285" height="1230" fill="url(#base)" />
      <rect x="3044" y="332" width="241" height="300" fill="#f1f9fc" opacity="0.8" />
      {upper.map(([a, b], i) => {
        const slope = 0.72 - (i / upper.length) * 0.17;
        const len = 320;
        return (
          <g key={i}>
            <line x1={a} y1={b} x2={a + len} y2={b - len * slope} stroke="url(#upperLine)" strokeWidth="5" />
            <line x1={a + 2} y1={b + 4} x2={a + len + 2} y2={b + 4 - len * slope} stroke="#ffffff" strokeWidth="3" />
          </g>
        );
      })}
      <polygon points={gearPoly} fill="url(#gearFill)" />
      {teeth.map(([, b], i) => {
        const [tx, ty] = pt(b, C.r);
        const len = 300 + (i / teeth.length) * 650;
        return (
          <g key={i}>
            <line x1={tx} y1={ty} x2={tx - len * 0.81} y2={ty + len * 0.58} stroke="url(#fadeLine)" strokeWidth="2" />
            <line x1={tx + 1} y1={ty + 3} x2={tx + 1 - len * 0.81} y2={ty + 3 + len * 0.58} stroke="url(#fadeWhite)" strokeWidth="2.500" />
          </g>
        );
      })}
      {peaks.map(([a, b], i) => {
        const slope = 1.5 - (i / peaks.length) * 1.5;
        const nSlope = 1.5 - ((i + 1) / peaks.length) * 1.5;
        const dx = 3300 - a;
        const next = peaks[i + 1] ?? [a - 16, b + 48];
        const endY = b + dx * slope;
        const nextEndY = next[1] + (3300 - next[0]) * nSlope;
        const band = 0.62;
        return (
          <g key={i}>
            <polygon
              points={`${a},${b + 2} 3300,${endY} 3300,${endY + (nextEndY - endY) * band} ${a + (next[0] - a) * band},${b + (next[1] - b) * band}`}
              fill="#d6e9f0"
              opacity="0.85"
            />
            <line x1={a} y1={b} x2={a - 520} y2={b + 360} stroke="url(#fadeLine)" strokeWidth="2" />
            <line x1={a} y1={b} x2={3300} y2={endY} stroke="#ffffff" strokeWidth="2.500" />
          </g>
        );
      })}
    </svg>
  );
}

const prompt =
  'Klicken Sie auf Elemente, ziehen Sie nach rechts für innerhalb des Zauns, ziehen Sie nach links für innerhalb des Zauns/den Zaun überlappend oder klicken Sie mit gedrückter Alt-Taste, um den ersten Vertexpunkt des Polygonzauns zu platzieren, oder klicken und ziehen Sie mit gedrückter Alt-Taste für einen Lassozaun. Drücken Sie die Esc-Taste, um die Anzeige von Eigenpun';

const topTabs: [string, number, number][] = [
  ['Datei', 86, 10], ['Home', 94, 0], ['Skizzieren', 137, 0], ['Diagramm', 130, 0], ['Prüfen', 105, 0], ['Extras', 95, 0], ['Add-Ins', 118, 0], ['Ansicht', 104, 0], ['Daten-Management', 224, 0],
];

export default function App() {
  return (
    <div className="relative w-[3285px] h-[1562px] overflow-hidden flex flex-col bg-white text-black font-['Liberation_Sans',Arial,sans-serif]">
      {/* Titelleiste und Register */}
      <div className="h-[82px] shrink-0 flex flex-col bg-[linear-gradient(90deg,#006587_62%,#3d8eaa_100%)] text-white">
        <div className="h-[52px] flex items-start">
          <div className="ml-[9px] mt-[2px] w-[36px] h-[36px] bg-[#1d3f9e] border border-white flex items-center justify-center text-[17px] font-bold">SE</div>
          <div className="ml-[1776px] mt-[12px] text-[19.800px] leading-[24px]">Solid Edge 2025 - Draft</div>
        </div>
        <div className="flex h-[30px]">
          {topTabs.map(([t, w, mr]) => (
            <div
              key={t}
              className={`h-[30px] flex items-center justify-center text-[19.500px] leading-[24px] ${t === 'Home' ? 'text-[#ffc93c] border-b-[3px] border-[#ffc93c]' : ''}`}
              style={{ width: w, marginRight: mr }}
            >
              {t}
            </div>
          ))}
        </div>
      </div>
      <div className="h-[2px] shrink-0 bg-[#cfcfcf]" />

      {/* Ribbon */}
      <div className="h-[128px] shrink-0 flex">
        <Group w={127} label="Zwischenablage">
          <BigBtn w={80} ml={8} icon={big.paste} label="Einfügen" caret />
          <div className="w-[24px] -ml-[1px] flex flex-col items-center">
            <Cell>{sm.scissors}</Cell><Cell>{sm.copy}</Cell><Cell>{sm.painter}</Cell>
          </div>
        </Group>
        <Sep />
        <Group w={179} label="Auswahl">
          <div className="w-[85px] h-[93px] ml-[9px] bg-[#cde4ec] border border-[#b7d6e6] flex flex-col items-center">
            <div className="h-[54px] flex items-center">
              <svg width={30} height={40} viewBox="0 0 30 40" fill="none"><path d="M7 1L26 27H17L21 38L15 39L11 28L7 33z" fill="#e8eef0" stroke="#333" strokeWidth="1.3" /></svg>
            </div>
            <div className="text-[16px] leading-[18px] text-[#222]">Auswählen</div>
            <div className="mt-[8px]"><Caret /></div>
          </div>
          <div className="w-[80px]">
            <div className="flex h-[31px]">
              <div className="w-[32px] flex justify-center items-center">{sm.filter}</div>
              <div className="ml-[16px] w-[32px] flex justify-center items-center">{sm.fence}</div>
            </div>
            <div className="flex h-[31px]">
              <div className="w-[48px] h-[31px] bg-[#cde4ec] border border-[#b7d6e6] flex items-center pl-[2px] gap-[3px]">{sm.selBox}<Caret /></div>
              <div className="w-[32px] flex justify-center items-center">{sm.orangeCube}</div>
            </div>
            <div className="w-[48px] h-[31px] bg-[#cde4ec] border border-[#b7d6e6] flex items-center pl-[2px] gap-[3px]">{sm.dash}<Caret /></div>
          </div>
        </Group>
        <Sep />
        <Group w={763} label="Zeichnungsansichten">
          <BigBtn w={115} ml={14} icon={big.model} label="Modellansichten" off />
          <BigBtn w={125} ml={8} icon={big.wizard} label="Ansichtsassistent" />
          <BigBtn w={90} ml={8} icon={big.update} label={'Ansichten\naktualisieren'} />
          <ThinSep ml={6} />
          <BigBtn w={96} ml={9} icon={big.principal} label="Hauptansicht" />
          <div className="ml-[9px] w-[132px] flex flex-col">
            <TextRow icon={<ScaledIc>{sm.hilfs}</ScaledIc>} label="Hilfs" h="h-[30px]" />
            <TextRow icon={<ScaledIc>{sm.einzelheit}</ScaledIc>} label="Einzelheit" />
            <TextRow icon={<ScaledIc>{sm.broken}</ScaledIc>} label="Unterbrochen" h="h-[30px]" off />
          </div>
          <ThinSep ml={4} />
          <div className="ml-[8px] flex flex-col">
            <TextRow icon={<ScaledIc>{sm.verlauf}</ScaledIc>} label="Schnittverlauf" h="h-[30px]" />
            <TextRow icon={<ScaledIc>{sm.schnitt}</ScaledIc>} label="Schnitt" />
            <TextRow icon={<ScaledIc>{sm.ausbruch}</ScaledIc>} label="Ausbruch" h="h-[30px]" />
          </div>
        </Group>
        <Sep />
        <Group w={374} label="Tabellen">
          <BigBtn w={70} ml={13} icon={big.parts} label="Stückliste" caret />
          <BigBtn w={116} ml={8} icon={big.hole} label="Bohrungstabelle" />
          <BigBtn w={90} ml={7} icon={big.bend} label="Biegetabelle" />
          <div className="ml-[2px] grid grid-cols-[30px_30px]">
            <Cell>{sm.t1}</Cell><Cell>{sm.t2}</Cell>
            <Cell>{sm.t3}</Cell><div />
            <Cell>{sm.t4}</Cell><div />
          </div>
        </Group>
        <Sep />
        <Group w={353} label="Bemaßen">
          <BigBtn w={120} ml={11} icon={big.smart} label="SmartDimension" />
          <div className="ml-[3px] grid grid-cols-[30px_17px_31px_31px_32px_31px]">
            <Cell>{sm.b11}</Cell><div /><Cell>{sm.b12}</Cell><Cell>{sm.b13}</Cell><Cell>{sm.b14}</Cell><Cell>{sm.b15}</Cell>
            <Cell>{sm.b21}</Cell><div /><Cell>{sm.b22}</Cell><Cell>{sm.b23}</Cell><Cell>{sm.b24}</Cell><Cell>{sm.b25}</Cell>
            <Cell>{sm.b31}</Cell><Cell><Caret /></Cell><Cell>{sm.b33}</Cell><Cell>{sm.b34}</Cell>
            <div className="h-[31px] bg-[#cde4ec] border border-[#b7d6e6] flex items-center justify-center">{sm.b35}</div>
            <Cell>{sm.b36}</Cell>
          </div>
          <ThinSep ml={4} />
          <div className="ml-[6px] w-[30px] flex flex-col">
            <Cell>{sm.styleA}</Cell><Cell>{sm.styleG}</Cell>
          </div>
        </Group>
        <Sep />
        <Group w={227} label="Beschriftung">
          <div className="ml-[9px] grid grid-cols-[30px_31px_31px_31px_18px_30px]">
            <Cell>{sm.c11}</Cell><Cell>{sm.c12}</Cell><Cell>{sm.c13}</Cell><Cell>{sm.c14}</Cell><div /><Cell>{sm.c15}</Cell>
            <Cell>{sm.c21}</Cell><Cell>{sm.c22}</Cell><Cell>{sm.c23}</Cell><Cell>{sm.c24}</Cell><Cell><Caret /></Cell><Cell>{sm.c25}</Cell>
            <Cell>{sm.c31}</Cell><Cell>{sm.c32}</Cell><Cell>{sm.c33}</Cell><Cell>{sm.c34}</Cell><div /><Cell>{sm.c35}</Cell>
          </div>
          <ThinSep ml={5} />
          <div className="ml-[4px] w-[30px] flex flex-col">
            <Cell>{sm.d1}</Cell><Cell>{sm.d2}</Cell>
          </div>
        </Group>
        <Sep />
        <Group w={173} label="Eigenschaftstext">
          <div className="ml-[10px] flex flex-col">
            <div className="flex items-center h-[30px] text-[16px] gap-[2px]">{sm.e1}<span>Alle aktualisieren</span></div>
            <div className="flex items-center h-[28px] text-[16px] gap-[2px]">{sm.e2}<span>Alle umwandeln</span></div>
          </div>
        </Group>
        <Sep />
        <Group w={60} label="Kanten">
          <div className="ml-[15px] w-[30px] flex flex-col">
            <Cell>{sm.k1}</Cell><Cell>{sm.k2}</Cell><Cell>{sm.k3}</Cell>
          </div>
        </Group>
        <Sep />
        <Group w={417} label="Ausrichten">
          <BigBtn w={170} ml={13} icon={big.zoomArea} label="Ausschnittvergrößerung" />
          <BigBtn w={74} ml={6} icon={big.resize} label={'Größe\nverändern'} />
          <BigBtn w={74} ml={7} icon={big.fit} label="Einpassen" />
          <div className="ml-[6px] grid grid-cols-[30px_32px]">
            <Cell>{sm.a1}</Cell><Cell>{sm.a2}</Cell>
            <Cell>{sm.a3}</Cell><div />
            <Cell>{sm.a4}</Cell><div />
          </div>
        </Group>
        <Sep />
        <Group w={533} label="Assistenten">
          <BigBtn w={60} ml={13} icon={big.create3d} label={'3D\nerstellen'} />
          <BigBtn w={204} ml={7} icon={big.viewLog} label="Zeichnungsansichtsprotokoll" />
          <BigBtn w={148} ml={7} icon={big.dimLog} label="Bemaßungsprotokoll" />
          <BigBtn w={84} ml={4} icon={big.inspector} label={'Solid Edge\nInspector'} off />
        </Group>
        <Sep />
      </div>
      <div className="h-[2px] shrink-0 bg-[#d4d4d4]" />

      {/* Schnellzugriff */}
      <div className="h-[39px] shrink-0 flex items-center pl-[41px]">
        {q.page}
        <div className="ml-[5px]"><Caret /></div>
        <div className="ml-[8px]">{q.open}</div>
        <div className="ml-[7px]">{q.history}</div>
        <div className="ml-[8px]">{q.save}</div>
        <div className="ml-[7px]">{q.saveAs}</div>
        <div className="ml-[2px]"><Caret /></div>
        <div className="ml-[6px]">{q.gear}</div>
        <div className="ml-[8px]">{q.list}</div>
        <div className="ml-[1px]"><Caret /></div>
        <div className="ml-[10px]">{q.exit}</div>
        <div className="ml-[11px]">{q.undo}</div>
        <div className="ml-[0px] opacity-30"><Caret /></div>
        <div className="ml-[6px]">{q.redo}</div>
        <div className="ml-[0px] opacity-30"><Caret /></div>
        <div className="ml-[7px]">{q.undoAll}</div>
        <div className="ml-[2px]">{q.custom}</div>
      </div>
      <div className="h-[1px] shrink-0 bg-[#999]" />

      {/* Eingabeaufforderung */}
      <div className="h-[35px] shrink-0 flex items-center overflow-hidden">
        <div className="w-[56px] h-[35px] shrink-0 bg-[#0f7ba0] flex items-center justify-center">
          <svg width={32} height={18} viewBox="0 0 32 18" fill="none">
            <rect x="1" y="1" width="30" height="15" fill="#dcdcdc" stroke="#333" />
            <rect x="1" y="1" width="30" height="4" fill="#888" />
            <path d="M4 8H11V13H4zM13 8H20V13H13zM22 8H29V13H22z" fill="#fff" stroke="#333" />
          </svg>
        </div>
        <div className="ml-[3px] text-[19.250px] leading-[24px] whitespace-nowrap">{prompt}</div>
      </div>
      <div className="h-[2px] shrink-0 bg-[#cfcfcf]" />

      {/* Dokument-Register */}
      <div className="h-[40px] shrink-0 flex items-end pl-[3px]">
        <div className="w-[136px] h-[36px] border-l border-[#bbb] flex items-center pl-[19px]">
          {docIcon}
          <span className="ml-[4px] text-[18px]">Draft1</span>
          <span className="ml-[24px] text-[18px] font-bold">X</span>
        </div>
        <div className="w-[264px] h-[36px] bg-[#006587] text-white flex items-center pl-[20px]">
          {docIcon}
          <span className="ml-[6px] text-[18px]">Im Druckformat an.dft</span>
          <span className="ml-[24px] text-[18px] font-bold">X</span>
        </div>
      </div>
      <div className="h-[1px] shrink-0 bg-[#1a6a88]" />

      {/* MDI-Bereich */}
      <div className="relative flex-1 min-h-0">
        <Backdrop />
        <div className="relative flex gap-[7px] pl-[3px] pt-[2px]">
          <Win active title="Im Druckformat an.dft" w={1517}><LeftDrawing /></Win>
          <Win active={false} title="Draft1" w={1518}><RightDrawing /></Win>
        </div>
      </div>

      {/* Mauszeiger */}
      <svg className="absolute left-[2691px] top-[3px]" width={20} height={28} viewBox="0 0 20 28">
        <path d="M1 1V22L6 17L10 26L14 24L10 16H18z" fill="#fff" stroke="#222" />
      </svg>
    </div>
  );
}
